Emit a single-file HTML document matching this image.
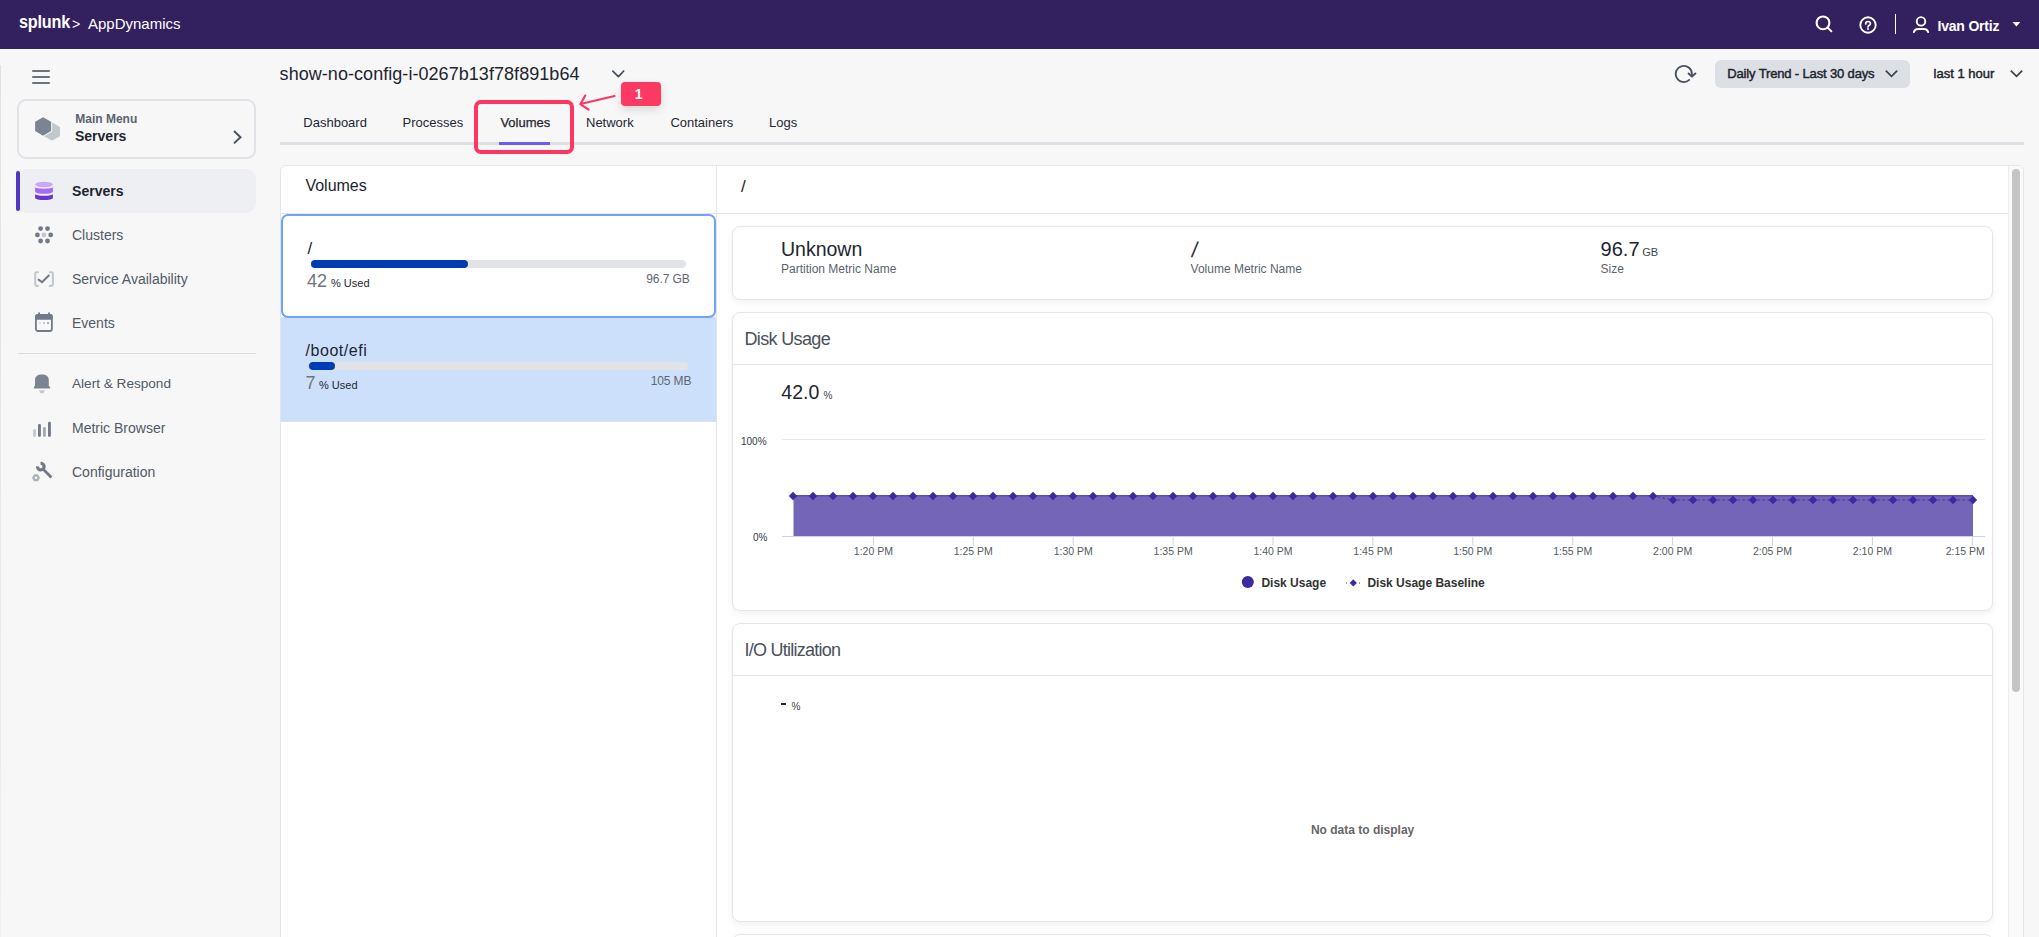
<!DOCTYPE html>
<html><head><meta charset="utf-8"><title>Volumes</title>
<style>
html,body{margin:0;padding:0;width:2039px;height:937px;overflow:hidden;background:#f7f7f7;}
body{position:relative;font-family:"Liberation Sans", sans-serif;-webkit-font-smoothing:antialiased;}
.t{position:absolute;white-space:nowrap;font-family:"Liberation Sans", sans-serif;}
</style></head><body>
<div style="position:absolute;left:0px;top:0px;width:2039px;height:49px;background:#33205f;"></div>
<div class="t" style="left:18.60px;top:13.04px;font-size:18.5px;line-height:18.5px;font-weight:700;color:#fff;transform:scaleX(0.875);transform-origin:0 0;letter-spacing:-0.2px;">splunk</div>
<div class="t" style="left:71.50px;top:15.70px;font-size:15px;line-height:15px;font-weight:400;color:#fff;transform:scaleX(0.95);transform-origin:0 0;">&gt;</div>
<div class="t" style="left:88.00px;top:16.00px;font-size:15px;line-height:15px;font-weight:400;color:#fff;">AppDynamics</div>
<svg style="position:absolute;left:1812px;top:12px" width="24" height="24" viewBox="0 0 24 24"><circle cx="11" cy="10.85" r="6.4" fill="none" stroke="#fff" stroke-width="2.1"/><line x1="15.6" y1="15.5" x2="19.4" y2="19.3" stroke="#fff" stroke-width="1.9" stroke-linecap="round"/></svg>
<svg style="position:absolute;left:1856px;top:13px" width="24" height="24" viewBox="0 0 24 24"><circle cx="12" cy="12" r="7.7" fill="none" stroke="#fff" stroke-width="1.9"/><path d="M9.7 10.9 Q9.7 8.5 12 8.5 Q14.4 8.5 14.4 10.6 Q14.4 11.9 13 12.5 Q12 13 12 14" fill="none" stroke="#fff" stroke-width="1.7" stroke-linecap="round"/><circle cx="12" cy="15.9" r="1" fill="#fff"/></svg>
<div style="position:absolute;left:1894.8px;top:14px;width:1.3px;height:20px;background:#fff;"></div>
<svg style="position:absolute;left:1909px;top:13px" width="24" height="24" viewBox="0 0 24 24"><circle cx="12" cy="8.4" r="4.25" fill="none" stroke="#fff" stroke-width="1.9"/><path d="M4.9 19.1 Q5.6 16 9.2 16 L14.8 16 Q18.4 16 19.1 19.1" fill="none" stroke="#fff" stroke-width="2" stroke-linecap="round"/></svg>
<div class="t" style="left:1937.50px;top:18.75px;font-size:14px;line-height:14px;font-weight:700;color:#fff;letter-spacing:-0.2px;">Ivan Ortiz</div>
<svg style="position:absolute;left:2012px;top:21px" width="9" height="7" viewBox="0 0 9 7"><path d="M0.5 1 L8.3 1 L4.4 5.6 Z" fill="#fff"/></svg>
<div style="position:absolute;left:0px;top:49px;width:2039px;height:888px;background:#f7f7f7;"></div>
<div style="position:absolute;left:0px;top:65px;width:1px;height:872px;background:linear-gradient(#dfe2e6,#eeeff0);"></div>
<div style="position:absolute;left:32px;top:70px;width:18px;height:2px;background:#6b737d;border-radius:1px;"></div>
<div style="position:absolute;left:32px;top:76px;width:18px;height:2px;background:#6b737d;border-radius:1px;"></div>
<div style="position:absolute;left:32px;top:82px;width:18px;height:2px;background:#6b737d;border-radius:1px;"></div>
<div style="position:absolute;left:17px;top:99px;width:239px;height:60px;box-sizing:border-box;border:2px solid #dfe2e6;border-radius:9px;background:#f7f7f7;"></div>
<svg style="position:absolute;left:28px;top:108px" width="40" height="40" viewBox="0 0 40 40"><path d="M24.00 15.40 L31.10 19.50 L31.10 27.70 L24.00 31.80 L16.90 27.70 L16.90 19.50 Z" fill="#c3c8ce" stroke="#c3c8ce" stroke-width="1.8" stroke-linejoin="round"/><path d="M15.10 10.20 L22.20 14.30 L22.20 22.50 L15.10 26.60 L8.00 22.50 L8.00 14.30 Z" fill="#7b8592" stroke="#f7f7f7" stroke-width="4" stroke-linejoin="round"/><path d="M15.10 10.20 L22.20 14.30 L22.20 22.50 L15.10 26.60 L8.00 22.50 L8.00 14.30 Z" fill="#7b8592" stroke="#7b8592" stroke-width="1.8" stroke-linejoin="round"/></svg>
<div class="t" style="left:75.25px;top:112.59px;font-size:12px;line-height:12px;font-weight:700;color:#5b6370;">Main Menu</div>
<div class="t" style="left:75.00px;top:129.15px;font-size:14px;line-height:14px;font-weight:700;color:#1d2530;">Servers</div>
<svg style="position:absolute;left:230px;top:128px" width="14" height="18" viewBox="0 0 14 18"><path d="M4 3 L10.5 9.2 L4 15.4" fill="none" stroke="#4a525d" stroke-width="2"/></svg>
<div style="position:absolute;left:16px;top:169px;width:240px;height:44px;background:#eeeff2;border-radius:10px;"></div>
<div style="position:absolute;left:16px;top:171px;width:4px;height:40px;background:#5136c2;border-radius:2px;"></div>
<svg style="position:absolute;left:30px;top:176px" width="30" height="30" viewBox="0 0 30 30"><path d="M5.1 18 A8.9 1.7 0 0 0 22.9 18 L22.9 21.9 A8.9 2.1 0 0 1 5.1 21.9 Z" fill="#6a35cf"/><path d="M5.1 11.1 A8.9 1.7 0 0 0 22.9 11.1 L22.9 15.8 A8.9 1.9 0 0 1 5.1 15.8 Z" fill="#a46cf4"/><ellipse cx="14" cy="8.5" rx="8.9" ry="2.75" fill="#caa8f8"/></svg>
<div class="t" style="left:72.10px;top:184.05px;font-size:14px;line-height:14px;font-weight:700;color:#1d2530;">Servers</div>
<svg style="position:absolute;left:34px;top:225px" width="20" height="20" viewBox="0 0 20 20"><circle cx="6.6" cy="3.6" r="2.4" fill="#717a86"/><circle cx="13.5" cy="3.6" r="2.4" fill="#717a86"/><circle cx="3.4" cy="9.9" r="2.4" fill="#717a86"/><circle cx="9.9" cy="9.9" r="2.4" fill="#c3c8ce"/><circle cx="16.7" cy="9.9" r="2.4" fill="#717a86"/><circle cx="6.6" cy="16" r="2.4" fill="#717a86"/><circle cx="13.5" cy="16" r="2.4" fill="#717a86"/></svg>
<div class="t" style="left:72.00px;top:228.15px;font-size:14px;line-height:14px;font-weight:400;color:#515a66;">Clusters</div>
<svg style="position:absolute;left:33px;top:270px" width="22" height="18" viewBox="0 0 22 18"><path d="M5.8 2.2 L3.6 2.2 Q2.2 2.2 2.2 3.6 L2.2 14.5 Q2.2 15.9 3.6 15.9 L5.8 15.9 M16 2.2 L18.5 2.2 Q19.9 2.2 19.9 3.6 L19.9 14.5 Q19.9 15.9 18.5 15.9 L16 15.9" fill="none" stroke="#c3c8ce" stroke-width="2.1"/><path d="M5.6 9.6 L9 12.3 L15.8 5.5" fill="none" stroke="#717a86" stroke-width="2" stroke-linecap="round" stroke-linejoin="round"/></svg>
<div class="t" style="left:72.00px;top:272.35px;font-size:14px;line-height:14px;font-weight:400;color:#515a66;">Service Availability</div>
<svg style="position:absolute;left:34px;top:312px" width="20" height="21" viewBox="0 0 20 21"><rect x="1.9" y="3" width="16" height="16" rx="2" fill="none" stroke="#717a86" stroke-width="1.8"/><rect x="1.2" y="2.3" width="17.4" height="5.4" rx="1.5" fill="#717a86"/><rect x="4.2" y="0.2" width="1.8" height="3" rx="0.8" fill="#717a86"/><rect x="14.1" y="0.2" width="1.8" height="3" rx="0.8" fill="#717a86"/><rect x="5" y="10.1" width="2" height="1.9" fill="#dde0e4"/><rect x="9" y="10.1" width="2" height="1.9" fill="#c3c8ce"/><rect x="13" y="10.1" width="2" height="1.9" fill="#aab0b8"/></svg>
<div class="t" style="left:72.00px;top:316.15px;font-size:14px;line-height:14px;font-weight:400;color:#515a66;">Events</div>
<div style="position:absolute;left:18px;top:353px;width:238px;height:1px;background:#d9dde2;"></div>
<svg style="position:absolute;left:33px;top:374px" width="18" height="20" viewBox="0 0 18 20"><path d="M2 11.7 L2 6 C2 2.5 4.5 0.6 8.9 0.6 C13.3 0.6 15.8 2.5 15.8 6 L15.8 11.7 L17.1 12.9 L17.1 14.4 L0.9 14.4 L0.9 12.9 Z" fill="#7b8592"/><path d="M6 16.3 L11.8 16.3 L10.5 19.3 L7.5 19.3 Z" fill="#c3c8ce"/></svg>
<div class="t" style="left:72.00px;top:377.49px;font-size:13.6px;line-height:13.6px;font-weight:400;color:#515a66;">Alert &amp; Respond</div>
<svg style="position:absolute;left:33px;top:421px" width="19" height="17" viewBox="0 0 19 17"><rect x="0.1" y="8" width="2.8" height="7.9" rx="1.4" fill="#c3c8ce"/><rect x="5" y="2.9" width="2.9" height="13" rx="1.45" fill="#717a86"/><rect x="10" y="6" width="2.8" height="9.9" rx="1.4" fill="#a1a8b2"/><rect x="15" y="0.8" width="2.9" height="15.1" rx="1.45" fill="#717a86"/></svg>
<div class="t" style="left:72.00px;top:421.15px;font-size:14px;line-height:14px;font-weight:400;color:#515a66;">Metric Browser</div>
<svg style="position:absolute;left:27px;top:457px" width="30" height="30" viewBox="0 0 30 30"><path d="M13.57 6.31 A3.3 3.3 0 1 1 10.51 9.37" fill="none" stroke="#717a86" stroke-width="3.2"/><line x1="16" y1="12" x2="24.4" y2="20.4" stroke="#717a86" stroke-width="2.8"/><path d="M11.70 20.80 L10.35 23.14 L7.65 23.14 L6.30 20.80 L7.65 18.46 L10.35 18.46 Z" fill="none" stroke="#a9b0b8" stroke-width="2.3" stroke-linejoin="round"/></svg>
<div class="t" style="left:72.00px;top:465.15px;font-size:14px;line-height:14px;font-weight:400;color:#515a66;">Configuration</div>
<div class="t" style="left:279.60px;top:64.86px;font-size:18px;line-height:18px;font-weight:400;color:#1d2530;letter-spacing:0.05px;">show-no-config-i-0267b13f78f891b64</div>
<svg style="position:absolute;left:611px;top:67px" width="15" height="12" viewBox="0 0 15 12"><path d="M1.8 4.2 L7.4 9.6 L12.7 4" fill="none" stroke="#454d58" stroke-width="1.7" stroke-linecap="round" stroke-linejoin="round"/></svg>
<svg style="position:absolute;left:1672px;top:63px" width="26" height="24" viewBox="0 0 26 24"><path d="M17.3 16.9 A8.1 8.1 0 1 1 19.9 11.4" fill="none" stroke="#4a525d" stroke-width="1.8" stroke-linecap="round"/><path d="M16.6 10.5 L19.9 13.6 L23.4 10.5" fill="none" stroke="#4a525d" stroke-width="2" stroke-linecap="round" stroke-linejoin="round"/></svg>
<div style="position:absolute;left:1715px;top:60px;width:195px;height:28px;background:#dcdfe3;border-radius:6px;"></div>
<div class="t" style="left:1727.30px;top:67.40px;font-size:13px;line-height:13px;font-weight:400;color:#1d2530;-webkit-text-stroke:0.45px #1d2530;letter-spacing:-0.15px;">Daily Trend - Last 30 days</div>
<svg style="position:absolute;left:1884px;top:68px" width="15" height="11" viewBox="0 0 15 11"><path d="M1.8 2.6 L7.5 8.3 L13.2 2.6" fill="none" stroke="#3b434e" stroke-width="1.7"/></svg>
<div class="t" style="left:1933.60px;top:67.20px;font-size:13px;line-height:13px;font-weight:400;color:#1d2530;-webkit-text-stroke:0.45px #1d2530;">last 1 hour</div>
<svg style="position:absolute;left:2009px;top:68px" width="15" height="11" viewBox="0 0 15 11"><path d="M1.8 2.6 L7.5 8.3 L13.2 2.6" fill="none" stroke="#3b434e" stroke-width="1.7"/></svg>
<div style="position:absolute;left:280px;top:142px;width:1744px;height:3px;background:#dcdfe3;"></div>
<div class="t" style="left:303.30px;top:116.40px;font-size:13px;line-height:13px;font-weight:400;color:#1f2732;">Dashboard</div>
<div class="t" style="left:402.60px;top:116.40px;font-size:13px;line-height:13px;font-weight:400;color:#1f2732;">Processes</div>
<div class="t" style="left:500.40px;top:116.40px;font-size:13px;line-height:13px;font-weight:400;color:#1f2732;-webkit-text-stroke:0.25px #1d2530;">Volumes</div>
<div class="t" style="left:586.00px;top:116.40px;font-size:13px;line-height:13px;font-weight:400;color:#1f2732;">Network</div>
<div class="t" style="left:670.40px;top:116.40px;font-size:13px;line-height:13px;font-weight:400;color:#1f2732;">Containers</div>
<div class="t" style="left:769.00px;top:116.40px;font-size:13px;line-height:13px;font-weight:400;color:#1f2732;">Logs</div>
<div style="position:absolute;left:499px;top:142px;width:51px;height:3px;background:#6a5cf5;"></div>
<div style="position:absolute;left:280px;top:165px;width:1744px;height:780px;box-sizing:border-box;border:1px solid #e3e5e8;border-radius:6px;background:#fff;"></div>
<div style="position:absolute;left:716px;top:166px;width:1px;height:771px;background:#e3e5e8;"></div>
<div style="position:absolute;left:281px;top:213px;width:1727px;height:1px;background:#e3e5e8;"></div>
<div class="t" style="left:305.40px;top:178.46px;font-size:16px;line-height:16px;font-weight:400;color:#1d2530;">Volumes</div>
<div class="t" style="left:741.00px;top:178.11px;font-size:17px;line-height:17px;font-weight:400;color:#1d2530;">/</div>
<div style="position:absolute;left:2008px;top:166px;width:15px;height:771px;background:#fafafa;border-left:1px solid #ececec;box-sizing:border-box;border-top-right-radius:5px;"></div>
<div style="position:absolute;left:2012px;top:169px;width:8.2px;height:523px;background:#c4c4c4;border-radius:4.1px;"></div>
<div style="position:absolute;left:281px;top:317px;width:435px;height:104px;background:#cce0fb;"></div>
<div style="position:absolute;left:281px;top:421px;width:435px;height:1px;background:#dde1e6;"></div>
<div style="position:absolute;left:281px;top:214px;width:435px;height:104px;box-sizing:border-box;border:2px solid #6fa3f4;border-radius:7px;background:#fff;"></div>
<div class="t" style="left:307.50px;top:240.11px;font-size:17px;line-height:17px;font-weight:400;color:#1d2530;">/</div>
<div style="position:absolute;left:311px;top:260px;width:375px;height:8px;background:#e1e3e6;border-radius:4px;"></div>
<div style="position:absolute;left:311px;top:260px;width:157px;height:8px;background:#003cb4;border-radius:4px;"></div>
<div class="t" style="left:307.00px;top:272.06px;font-size:18px;line-height:18px;font-weight:400;color:#6f757e;">42</div>
<div class="t" style="left:331.00px;top:277.89px;font-size:11px;line-height:11px;font-weight:400;color:#1d2530;">% Used</div>
<div class="t" style="right:1349.40px;top:272.64px;font-size:12px;line-height:12px;font-weight:400;color:#5f6670;letter-spacing:-0.1px;">96.7 GB</div>
<div class="t" style="left:305.50px;top:342.76px;font-size:16px;line-height:16px;font-weight:400;color:#1d2530;letter-spacing:0.55px;">/boot/efi</div>
<div style="position:absolute;left:309px;top:362px;width:379px;height:8px;background:#e1e3e6;border-radius:4px;"></div>
<div style="position:absolute;left:309px;top:362px;width:26px;height:8px;background:#003cb4;border-radius:4px;"></div>
<div class="t" style="left:305.50px;top:373.96px;font-size:18px;line-height:18px;font-weight:400;color:#6f757e;">7</div>
<div class="t" style="left:319.00px;top:379.69px;font-size:11px;line-height:11px;font-weight:400;color:#1d2530;">% Used</div>
<div class="t" style="right:1347.60px;top:374.84px;font-size:12px;line-height:12px;font-weight:400;color:#5f6670;letter-spacing:-0.1px;">105 MB</div>
<div style="position:absolute;left:732px;top:226px;width:1261px;height:74px;box-sizing:border-box;border:1px solid #e4e6ea;border-radius:8px;background:#fff;box-shadow:0 3px 7px rgba(0,0,0,0.055);"></div>
<div class="t" style="left:781.00px;top:240.29px;font-size:19.5px;line-height:19.5px;font-weight:400;color:#1d2530;">Unknown</div>
<div class="t" style="left:781.00px;top:262.64px;font-size:12px;line-height:12px;font-weight:400;color:#5b6370;">Partition Metric Name</div>
<div class="t" style="left:1189.70px;top:240.20px;font-size:21.5px;line-height:21.5px;font-weight:400;color:#2b323c;transform:skewX(-8deg);transform-origin:0 100%;">/</div>
<div class="t" style="left:1190.60px;top:262.84px;font-size:12px;line-height:12px;font-weight:400;color:#5b6370;">Volume Metric Name</div>
<div class="t" style="left:1600.60px;top:238.97px;font-size:20px;line-height:20px;font-weight:400;color:#1d2530;">96.7</div>
<div class="t" style="left:1642.20px;top:247.09px;font-size:11px;line-height:11px;font-weight:400;color:#3b434e;">GB</div>
<div class="t" style="left:1600.60px;top:262.64px;font-size:12px;line-height:12px;font-weight:400;color:#5b6370;">Size</div>
<div style="position:absolute;left:732px;top:312px;width:1261px;height:299px;box-sizing:border-box;border:1px solid #e4e6ea;border-radius:8px;background:#fff;box-shadow:0 3px 7px rgba(0,0,0,0.055);"></div>
<div style="position:absolute;left:733px;top:364px;width:1259px;height:1px;background:#e4e6ea;"></div>
<div class="t" style="left:744.50px;top:329.56px;font-size:18px;line-height:18px;font-weight:400;color:#4a515b;letter-spacing:-0.65px;">Disk Usage</div>
<div class="t" style="left:781.30px;top:383.09px;font-size:19.5px;line-height:19.5px;font-weight:400;color:#1d2530;">42.0</div>
<div class="t" style="left:823.40px;top:391.14px;font-size:10px;line-height:10px;font-weight:400;color:#3b434e;">%</div>
<div class="t" style="left:741.00px;top:437.14px;font-size:10px;line-height:10px;font-weight:400;color:#333a44;">100%</div>
<div class="t" style="left:753.00px;top:533.24px;font-size:10px;line-height:10px;font-weight:400;color:#333a44;">0%</div>
<svg style="position:absolute;left:0;top:0" width="2039" height="937"><line x1="782" y1="439.5" x2="1985" y2="439.5" stroke="#e6e8ec" stroke-width="1"/><rect x="793.5" y="495" width="1179.5" height="41.5" fill="#7565b8"/><line x1="793.5" y1="495.8" x2="1973" y2="495.8" stroke="#5f4db0" stroke-width="1.6"/><line x1="782" y1="536.5" x2="1985" y2="536.5" stroke="#c9d3ea" stroke-width="1.2"/><path d="M1653 496 L1673 500 L1973 500" fill="none" stroke="#3a2a9e" stroke-width="1" stroke-dasharray="2 3"/><path d="M793 491.8 L797.2 496 L793 500.2 L788.8 496 Z" fill="#3c2aa0"/><path d="M813 491.8 L817.2 496 L813 500.2 L808.8 496 Z" fill="#3c2aa0"/><path d="M833 491.8 L837.2 496 L833 500.2 L828.8 496 Z" fill="#3c2aa0"/><path d="M853 491.8 L857.2 496 L853 500.2 L848.8 496 Z" fill="#3c2aa0"/><path d="M873 491.8 L877.2 496 L873 500.2 L868.8 496 Z" fill="#3c2aa0"/><path d="M893 491.8 L897.2 496 L893 500.2 L888.8 496 Z" fill="#3c2aa0"/><path d="M913 491.8 L917.2 496 L913 500.2 L908.8 496 Z" fill="#3c2aa0"/><path d="M933 491.8 L937.2 496 L933 500.2 L928.8 496 Z" fill="#3c2aa0"/><path d="M953 491.8 L957.2 496 L953 500.2 L948.8 496 Z" fill="#3c2aa0"/><path d="M973 491.8 L977.2 496 L973 500.2 L968.8 496 Z" fill="#3c2aa0"/><path d="M993 491.8 L997.2 496 L993 500.2 L988.8 496 Z" fill="#3c2aa0"/><path d="M1013 491.8 L1017.2 496 L1013 500.2 L1008.8 496 Z" fill="#3c2aa0"/><path d="M1033 491.8 L1037.2 496 L1033 500.2 L1028.8 496 Z" fill="#3c2aa0"/><path d="M1053 491.8 L1057.2 496 L1053 500.2 L1048.8 496 Z" fill="#3c2aa0"/><path d="M1073 491.8 L1077.2 496 L1073 500.2 L1068.8 496 Z" fill="#3c2aa0"/><path d="M1093 491.8 L1097.2 496 L1093 500.2 L1088.8 496 Z" fill="#3c2aa0"/><path d="M1113 491.8 L1117.2 496 L1113 500.2 L1108.8 496 Z" fill="#3c2aa0"/><path d="M1133 491.8 L1137.2 496 L1133 500.2 L1128.8 496 Z" fill="#3c2aa0"/><path d="M1153 491.8 L1157.2 496 L1153 500.2 L1148.8 496 Z" fill="#3c2aa0"/><path d="M1173 491.8 L1177.2 496 L1173 500.2 L1168.8 496 Z" fill="#3c2aa0"/><path d="M1193 491.8 L1197.2 496 L1193 500.2 L1188.8 496 Z" fill="#3c2aa0"/><path d="M1213 491.8 L1217.2 496 L1213 500.2 L1208.8 496 Z" fill="#3c2aa0"/><path d="M1233 491.8 L1237.2 496 L1233 500.2 L1228.8 496 Z" fill="#3c2aa0"/><path d="M1253 491.8 L1257.2 496 L1253 500.2 L1248.8 496 Z" fill="#3c2aa0"/><path d="M1273 491.8 L1277.2 496 L1273 500.2 L1268.8 496 Z" fill="#3c2aa0"/><path d="M1293 491.8 L1297.2 496 L1293 500.2 L1288.8 496 Z" fill="#3c2aa0"/><path d="M1313 491.8 L1317.2 496 L1313 500.2 L1308.8 496 Z" fill="#3c2aa0"/><path d="M1333 491.8 L1337.2 496 L1333 500.2 L1328.8 496 Z" fill="#3c2aa0"/><path d="M1353 491.8 L1357.2 496 L1353 500.2 L1348.8 496 Z" fill="#3c2aa0"/><path d="M1373 491.8 L1377.2 496 L1373 500.2 L1368.8 496 Z" fill="#3c2aa0"/><path d="M1393 491.8 L1397.2 496 L1393 500.2 L1388.8 496 Z" fill="#3c2aa0"/><path d="M1413 491.8 L1417.2 496 L1413 500.2 L1408.8 496 Z" fill="#3c2aa0"/><path d="M1433 491.8 L1437.2 496 L1433 500.2 L1428.8 496 Z" fill="#3c2aa0"/><path d="M1453 491.8 L1457.2 496 L1453 500.2 L1448.8 496 Z" fill="#3c2aa0"/><path d="M1473 491.8 L1477.2 496 L1473 500.2 L1468.8 496 Z" fill="#3c2aa0"/><path d="M1493 491.8 L1497.2 496 L1493 500.2 L1488.8 496 Z" fill="#3c2aa0"/><path d="M1513 491.8 L1517.2 496 L1513 500.2 L1508.8 496 Z" fill="#3c2aa0"/><path d="M1533 491.8 L1537.2 496 L1533 500.2 L1528.8 496 Z" fill="#3c2aa0"/><path d="M1553 491.8 L1557.2 496 L1553 500.2 L1548.8 496 Z" fill="#3c2aa0"/><path d="M1573 491.8 L1577.2 496 L1573 500.2 L1568.8 496 Z" fill="#3c2aa0"/><path d="M1593 491.8 L1597.2 496 L1593 500.2 L1588.8 496 Z" fill="#3c2aa0"/><path d="M1613 491.8 L1617.2 496 L1613 500.2 L1608.8 496 Z" fill="#3c2aa0"/><path d="M1633 491.8 L1637.2 496 L1633 500.2 L1628.8 496 Z" fill="#3c2aa0"/><path d="M1653 491.8 L1657.2 496 L1653 500.2 L1648.8 496 Z" fill="#3c2aa0"/><path d="M1673 495.8 L1677.2 500 L1673 504.2 L1668.8 500 Z" fill="#3c2aa0"/><path d="M1693 495.8 L1697.2 500 L1693 504.2 L1688.8 500 Z" fill="#3c2aa0"/><path d="M1713 495.8 L1717.2 500 L1713 504.2 L1708.8 500 Z" fill="#3c2aa0"/><path d="M1733 495.8 L1737.2 500 L1733 504.2 L1728.8 500 Z" fill="#3c2aa0"/><path d="M1753 495.8 L1757.2 500 L1753 504.2 L1748.8 500 Z" fill="#3c2aa0"/><path d="M1773 495.8 L1777.2 500 L1773 504.2 L1768.8 500 Z" fill="#3c2aa0"/><path d="M1793 495.8 L1797.2 500 L1793 504.2 L1788.8 500 Z" fill="#3c2aa0"/><path d="M1813 495.8 L1817.2 500 L1813 504.2 L1808.8 500 Z" fill="#3c2aa0"/><path d="M1833 495.8 L1837.2 500 L1833 504.2 L1828.8 500 Z" fill="#3c2aa0"/><path d="M1853 495.8 L1857.2 500 L1853 504.2 L1848.8 500 Z" fill="#3c2aa0"/><path d="M1873 495.8 L1877.2 500 L1873 504.2 L1868.8 500 Z" fill="#3c2aa0"/><path d="M1893 495.8 L1897.2 500 L1893 504.2 L1888.8 500 Z" fill="#3c2aa0"/><path d="M1913 495.8 L1917.2 500 L1913 504.2 L1908.8 500 Z" fill="#3c2aa0"/><path d="M1933 495.8 L1937.2 500 L1933 504.2 L1928.8 500 Z" fill="#3c2aa0"/><path d="M1953 495.8 L1957.2 500 L1953 504.2 L1948.8 500 Z" fill="#3c2aa0"/><path d="M1973 495.8 L1977.2 500 L1973 504.2 L1968.8 500 Z" fill="#3c2aa0"/><line x1="873.4" y1="537" x2="873.4" y2="545.7" stroke="#c9d3ea" stroke-width="1"/><line x1="973.3" y1="537" x2="973.3" y2="545.7" stroke="#c9d3ea" stroke-width="1"/><line x1="1073.2" y1="537" x2="1073.2" y2="545.7" stroke="#c9d3ea" stroke-width="1"/><line x1="1173.1" y1="537" x2="1173.1" y2="545.7" stroke="#c9d3ea" stroke-width="1"/><line x1="1273.0" y1="537" x2="1273.0" y2="545.7" stroke="#c9d3ea" stroke-width="1"/><line x1="1372.9" y1="537" x2="1372.9" y2="545.7" stroke="#c9d3ea" stroke-width="1"/><line x1="1472.8" y1="537" x2="1472.8" y2="545.7" stroke="#c9d3ea" stroke-width="1"/><line x1="1572.7" y1="537" x2="1572.7" y2="545.7" stroke="#c9d3ea" stroke-width="1"/><line x1="1672.6" y1="537" x2="1672.6" y2="545.7" stroke="#c9d3ea" stroke-width="1"/><line x1="1772.5" y1="537" x2="1772.5" y2="545.7" stroke="#c9d3ea" stroke-width="1"/><line x1="1872.4" y1="537" x2="1872.4" y2="545.7" stroke="#c9d3ea" stroke-width="1"/><line x1="1972.3" y1="537" x2="1972.3" y2="545.7" stroke="#c9d3ea" stroke-width="1"/></svg>
<div class="t" style="left:873.40px;transform:translateX(-50%);top:546.41px;font-size:10.5px;line-height:10.5px;font-weight:400;color:#555b63;">1:20 PM</div>
<div class="t" style="left:973.30px;transform:translateX(-50%);top:546.41px;font-size:10.5px;line-height:10.5px;font-weight:400;color:#555b63;">1:25 PM</div>
<div class="t" style="left:1073.20px;transform:translateX(-50%);top:546.41px;font-size:10.5px;line-height:10.5px;font-weight:400;color:#555b63;">1:30 PM</div>
<div class="t" style="left:1173.10px;transform:translateX(-50%);top:546.41px;font-size:10.5px;line-height:10.5px;font-weight:400;color:#555b63;">1:35 PM</div>
<div class="t" style="left:1273.00px;transform:translateX(-50%);top:546.41px;font-size:10.5px;line-height:10.5px;font-weight:400;color:#555b63;">1:40 PM</div>
<div class="t" style="left:1372.90px;transform:translateX(-50%);top:546.41px;font-size:10.5px;line-height:10.5px;font-weight:400;color:#555b63;">1:45 PM</div>
<div class="t" style="left:1472.80px;transform:translateX(-50%);top:546.41px;font-size:10.5px;line-height:10.5px;font-weight:400;color:#555b63;">1:50 PM</div>
<div class="t" style="left:1572.70px;transform:translateX(-50%);top:546.41px;font-size:10.5px;line-height:10.5px;font-weight:400;color:#555b63;">1:55 PM</div>
<div class="t" style="left:1672.60px;transform:translateX(-50%);top:546.41px;font-size:10.5px;line-height:10.5px;font-weight:400;color:#555b63;">2:00 PM</div>
<div class="t" style="left:1772.50px;transform:translateX(-50%);top:546.41px;font-size:10.5px;line-height:10.5px;font-weight:400;color:#555b63;">2:05 PM</div>
<div class="t" style="left:1872.40px;transform:translateX(-50%);top:546.41px;font-size:10.5px;line-height:10.5px;font-weight:400;color:#555b63;">2:10 PM</div>
<div class="t" style="right:54.20px;top:546.41px;font-size:10.5px;line-height:10.5px;font-weight:400;color:#555b63;">2:15 PM</div>
<svg style="position:absolute;left:1240px;top:574px" width="14" height="14"><circle cx="7.8" cy="7.9" r="6" fill="#3c2aa0"/></svg>
<div class="t" style="left:1261.40px;top:577.24px;font-size:12px;line-height:12px;font-weight:700;color:#333;">Disk Usage</div>
<svg style="position:absolute;left:1344px;top:577px" width="18" height="12"><line x1="2" y1="6" x2="3" y2="6" stroke="#3c2aa0"/><path d="M9.3 2.3 L12.9 5.9 L9.3 9.5 L5.7 5.9 Z" fill="#3c2aa0"/><line x1="15" y1="6" x2="16" y2="6" stroke="#3c2aa0"/></svg>
<div class="t" style="left:1367.40px;top:577.24px;font-size:12px;line-height:12px;font-weight:700;color:#333;">Disk Usage Baseline</div>
<div style="position:absolute;left:732px;top:623px;width:1261px;height:299px;box-sizing:border-box;border:1px solid #e4e6ea;border-radius:8px;background:#fff;box-shadow:0 3px 7px rgba(0,0,0,0.055);"></div>
<div style="position:absolute;left:733px;top:675px;width:1259px;height:1px;background:#e4e6ea;"></div>
<div class="t" style="left:744.50px;top:640.56px;font-size:18px;line-height:18px;font-weight:400;color:#4a515b;letter-spacing:-0.75px;">I/O Utilization</div>
<div style="position:absolute;left:780.5px;top:703px;width:5px;height:2px;background:#1d2530;"></div>
<div class="t" style="left:791.40px;top:701.53px;font-size:10px;line-height:10px;font-weight:400;color:#3b434e;">%</div>
<div class="t" style="left:1362.60px;transform:translateX(-50%);top:824.04px;font-size:12px;line-height:12px;font-weight:700;color:#666;">No data to display</div>
<div style="position:absolute;left:732px;top:934px;width:1261px;height:20px;box-sizing:border-box;border:1px solid #e4e6ea;border-radius:8px;background:#fff;box-shadow:0 3px 7px rgba(0,0,0,0.055);"></div>
<div style="position:absolute;left:473.5px;top:99.7px;width:100px;height:54px;box-sizing:border-box;border:4px solid #fb3660;border-radius:7px;"></div>
<svg style="position:absolute;left:0;top:0;pointer-events:none" width="2039" height="937"><path d="M614.6 96.1 L580.6 104.1 M585.3 95.4 L580.3 104.2 L588.6 109.6" fill="none" stroke="#fb3660" stroke-width="2.1" stroke-linecap="round" stroke-linejoin="round"/></svg>
<div style="position:absolute;left:621px;top:82px;width:40px;height:24px;background:#fb3962;border-radius:4px;box-shadow:0 4px 10px rgba(0,0,0,0.12);"></div>
<div class="t" style="left:638.60px;transform:translateX(-50%);top:87.35px;font-size:14px;line-height:14px;font-weight:700;color:#fff;">1</div>
</body></html>
